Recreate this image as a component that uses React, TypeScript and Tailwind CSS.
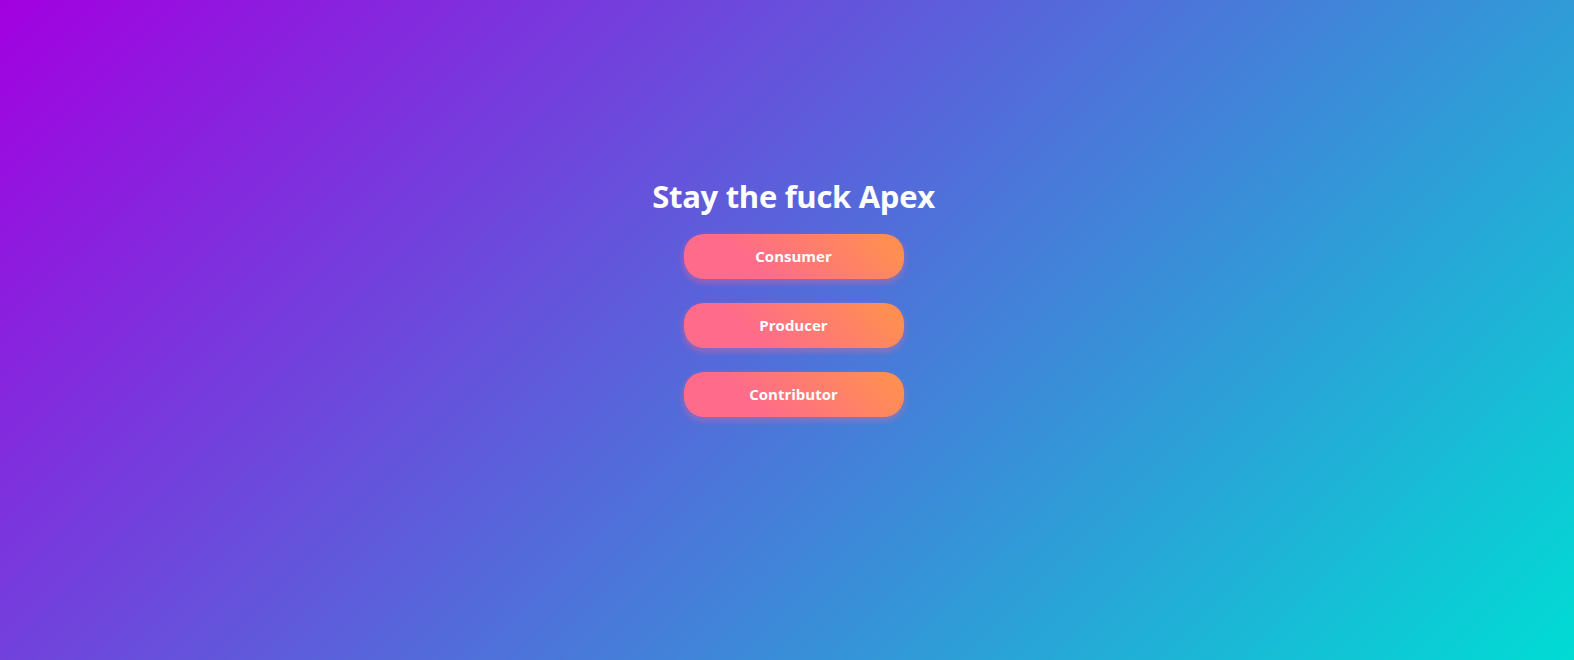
import React from "react";

export default function App() {
  const labels = ["Consumer", "Producer", "Contributor"];
  return (
    <div
      className="min-h-screen h-[660px] w-full flex flex-col items-center pl-[13px] bg-[linear-gradient(135deg,#a200e0_0%,#00dcd4_100%)]"
      style={{ fontFamily: '"Open Sans", "Noto Sans", sans-serif' }}
    >
      <h1 className="mt-[176px] text-[31px] leading-[40px] font-bold text-white tracking-[-0.3px]">
        Stay the fuck Apex
      </h1>
      <div className="mt-[18px] flex flex-col gap-[24px]">
        {labels.map((l) => (
          <button
            key={l}
            className="w-[220px] h-[45px] rounded-[20px] text-white font-bold text-[15px] bg-[linear-gradient(45deg,#fe6b8b_30%,#ff8e53_90%)] shadow-[0_3px_5px_2px_rgba(255,105,135,0.3)]"
          >
            {l}
          </button>
        ))}
      </div>
    </div>
  );
}
